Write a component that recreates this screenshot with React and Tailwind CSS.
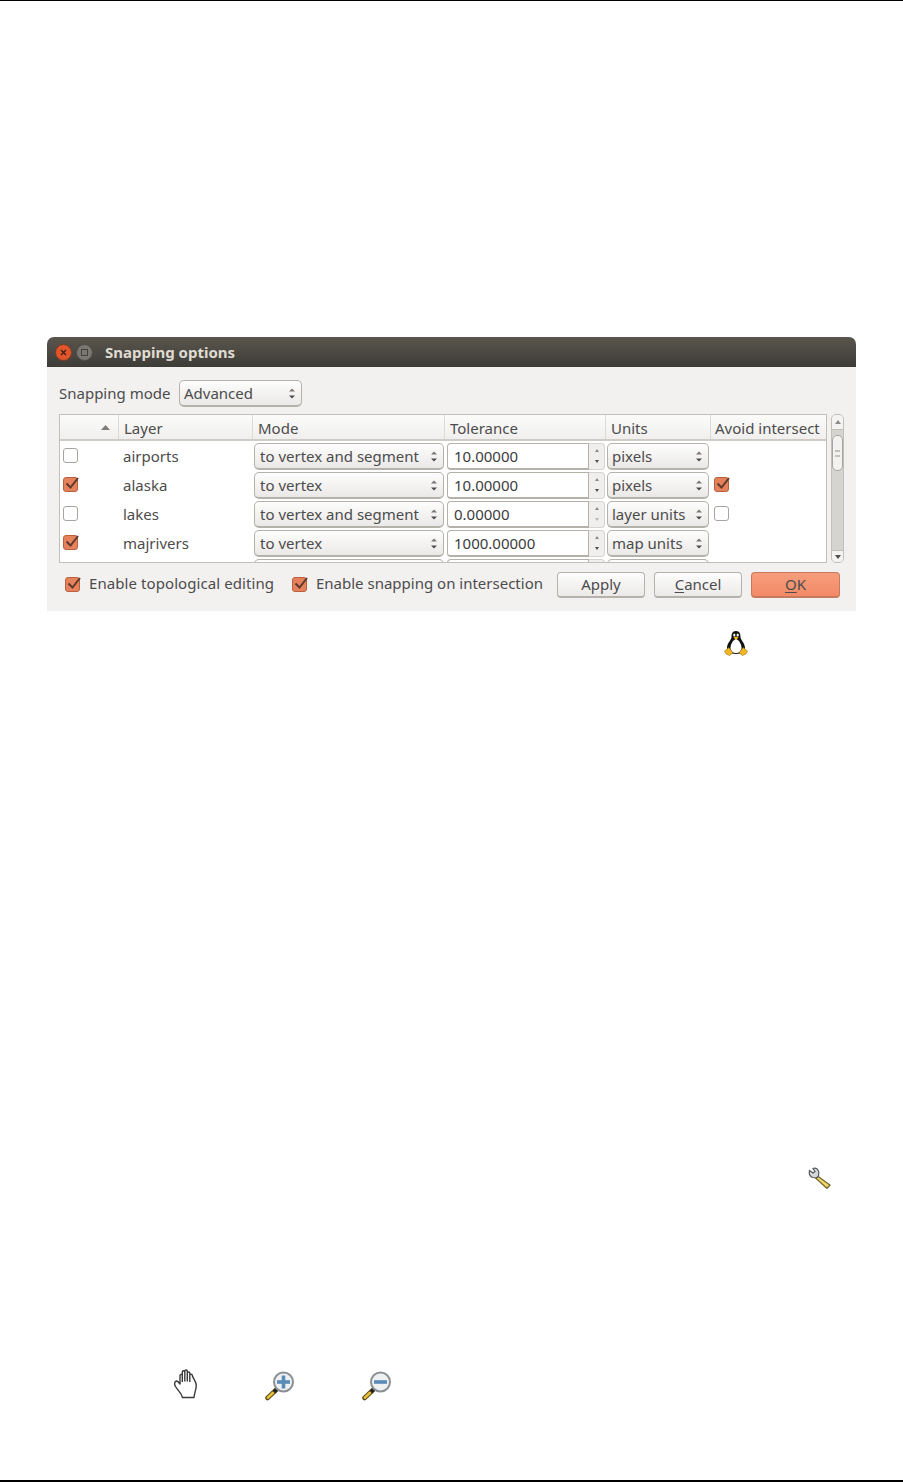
const font = { fontFamily: '"Noto Sans", sans-serif' };

const rows = [
  { name: "airports", on: false, mode: "to vertex and segment", tol: "10.00000", units: "pixels", avoid: null },
  { name: "alaska", on: true, mode: "to vertex", tol: "10.00000", units: "pixels", avoid: true },
  { name: "lakes", on: false, mode: "to vertex and segment", tol: "0.00000", units: "layer units", avoid: false, atMin: true },
  { name: "majrivers", on: true, mode: "to vertex", tol: "1000.00000", units: "map units", avoid: null },
  { name: "", on: false, mode: "", tol: "", units: "", avoid: null },
];

const gridCols = "grid grid-cols-[59px_134px_192px_161px_105px_115px]";

const UpDown = () => (
  <svg width="8" height="13" viewBox="0 0 8 13" className="shrink-0">
    <path d="M4 1.5 L7 4.5 H1 Z" fill="#7a7670" />
    <path d="M4 11.5 L7 8.5 H1 Z" fill="#4c4c4c" />
  </svg>
);

const Check = ({ on, className = "" }) => (
  <span
    className={`relative block w-[15px] h-[15px] rounded-[3px] border shrink-0 ${
      on ? "bg-[#e5825c] border-[#b9613f]" : "bg-white border-[#a8a5a0]"
    } ${className}`}
  >
    {on && (
      <svg width="17" height="15" viewBox="0 0 17 15" className="absolute left-[0px] top-[-2px]">
        <path d="M2.5 7.5 L6.5 11.5 L14 2" fill="none" stroke="#5e3a2c" strokeWidth="2" />
      </svg>
    )}
  </span>
);

const Combo = ({ text, className = "" }) => (
  <div
    className={`flex items-center justify-between rounded-[5px] border border-[#b5b2ac] border-b-2 bg-gradient-to-b from-[#fdfdfd] to-[#ebe9e7] pr-[5px] text-[#4c4c4c] overflow-hidden ${className}`}
  >
    <span className="whitespace-nowrap">{text}</span>
    <UpDown />
  </div>
);

const Spin = ({ text, atMin }) => (
  <div className="flex h-[27px] w-[158px] ml-[2px]">
    <div className="w-[142px] h-[27px] rounded-l-[4px] border border-[#b5b2ac] border-b-2 bg-white pl-[6px] leading-[25px] text-[#3c3c3c]">
      {text}
    </div>
    <div className="w-[16px] h-[27px] rounded-r-[4px] border border-l-0 border-[#d5d3cf] bg-[#f0efed] flex flex-col items-center justify-between py-[5px]">
      <svg width="6" height="4" viewBox="0 0 6 4"><path d="M3 0 L5 3 H1 Z" fill="#8a8a8a" /></svg>
      <svg width="6" height="4" viewBox="0 0 6 4"><path d="M3 3 L5 0 H1 Z" fill={atMin ? "#b5b5b5" : "#4c4c4c"} /></svg>
    </div>
  </div>
);

const Button = ({ children, primary, className = "" }) => (
  <div
    className={`h-[26px] rounded-[4px] border border-b-2 flex items-center justify-center text-[#4c4c4c] ${
      primary
        ? "border-[#c77a5c] bg-gradient-to-b from-[#f79d7c] to-[#f28a66]"
        : "border-[#b5b2ac] bg-gradient-to-b from-[#fdfdfd] to-[#eceae8]"
    } ${className}`}
  >
    {children}
  </div>
);

const Penguin = () => (
  <svg width="24" height="26" viewBox="0 0 24 26">
    <path d="M12 1 C8 1 7.5 4.5 7.5 7 C7.5 10 3 13 3 18 C3 21 6 24 12 24 C18 24 21 21 21 18 C21 13 16.5 10 16.5 7 C16.5 4.5 16 1 12 1 Z" fill="#111" />
    <path d="M12 9 C9 10 6.5 14 6.5 18 C6.5 21 9 23 12 23 C15 23 17.5 21 17.5 18 C17.5 14 15 10 12 9 Z" fill="#fff" />
    <ellipse cx="10.3" cy="5" rx="1.1" ry="1.5" fill="#fff" />
    <ellipse cx="13.7" cy="5" rx="1.1" ry="1.5" fill="#fff" />
    <path d="M9.5 7.5 L12 6.5 L14.5 7.5 L12 10 Z" fill="#f4b622" />
    <path d="M0.5 21 L5 17.5 L9 23 L5.5 25.5 L2 24 Z" fill="#f4b622" stroke="#8a6510" strokeWidth="0.5" />
    <path d="M23.5 21 L19 17.5 L15 23 L18.5 25.5 L22 24 Z" fill="#f4b622" stroke="#8a6510" strokeWidth="0.5" />
  </svg>
);

const Wrench = () => (
  <svg width="24" height="22" viewBox="0 0 24 22">
    <path d="M9.5 9 L22 18 L19 21.5 L8 11.5 Z" fill="#ecd46a" stroke="#6e6226" strokeWidth="1.2" />
    <path d="M1.5 3.5 L5 6 L7 4.5 L5 1.5 C8 0.5 11 2.5 10.8 6 L10.5 9 L8.5 11 L5 10.5 C2 10 0.5 7 1.5 3.5 Z" fill="#d5d7d8" stroke="#55595c" strokeWidth="1.2" />
  </svg>
);

const Hand = () => (
  <svg width="26" height="30" viewBox="0 0 26 30">
    <path
      d="M7 15 V6.5 C7 5 9.3 5 9.3 6.5 V3 C9.3 1.4 11.8 1.4 11.8 3 V2.2 C11.8 0.6 14.3 0.6 14.3 2.2 V4 C14.3 2.6 16.8 2.6 16.8 4 V6 C16.8 4.8 19.2 4.8 19.2 6.2 C20.5 11 24.5 13 23 19 C22.5 22 21.5 24 21 28.5 H9.5 C8.5 24 5.5 22.5 2.5 17.5 C1 15 1.5 12.2 3.5 12 C5 12 6 13.5 7 15 Z M9.3 6.5 V13 M11.8 3 V12.5 M14.3 4 V12.5 M16.8 6 V13"
      fill="#fff"
      stroke="#3a3a3a"
      strokeWidth="1.4"
      strokeLinejoin="round"
    />
  </svg>
);

const Magnifier = ({ plus }) => (
  <svg width="30" height="30" viewBox="0 0 30 30">
    <path d="M2.5 27 L11.5 18.5" stroke="#5b4a12" strokeWidth="4.5" strokeLinecap="round" />
    <path d="M2.8 26.7 L8 21.8" stroke="#e3c13c" strokeWidth="2.6" strokeLinecap="round" />
    <path d="M9 21 L12 18" stroke="#222" strokeWidth="3.5" />
    <circle cx="18.5" cy="11" r="9.5" fill="#eef0f1" stroke="#8b9094" strokeWidth="2" />
    <path d="M12 11 H25" stroke="#5b8bb8" strokeWidth="3.6" />
    {plus && <path d="M18.5 4.5 V17.5" stroke="#5b8bb8" strokeWidth="3.6" />}
  </svg>
);

const Dialog = () => (
  <div className="w-[809px] h-[274px] ml-[47px] flex flex-col rounded-t-[7px] overflow-hidden bg-[#f2f1f0] text-[15px] text-[#4c4c4c]">
    {/* Title bar */}
    <div className="h-[30px] shrink-0 flex items-center pl-[8px] bg-gradient-to-b from-[#5a564e] to-[#3e3c37]">
      <span className="w-[17px] h-[17px] rounded-full bg-[#e0562a] border border-[#7c3a22] flex items-center justify-center">
        <svg width="7" height="7" viewBox="0 0 7 7"><path d="M1 1 L6 6 M6 1 L1 6" stroke="#3a2018" strokeWidth="1.3" /></svg>
      </span>
      <span className="w-[17px] h-[17px] ml-[4px] rounded-full bg-[#7a7770] border border-[#4c4a45] flex items-center justify-center">
        <span className="w-[7px] h-[7px] border border-[#45433e]" />
      </span>
      <span className="ml-[12px] text-[15px] font-bold text-[#dfdbd2]">Snapping options</span>
    </div>

    {/* Mode selector */}
    <div className="flex items-center h-[27px] mt-[13px] ml-[12px] shrink-0">
      <span className="w-[120px]">Snapping mode</span>
      <Combo text="Advanced" className="w-[123px] h-[27px] pl-[4px]" />
    </div>

    {/* Layer table and scrollbar */}
    <div className="flex mt-[7px] ml-[12px] shrink-0">
      <div className="w-[768px] h-[149px] border border-[#c2bfba] bg-white overflow-hidden">
        <div className={`${gridCols} h-[26px] border-b-2 border-[#cfccc8] bg-gradient-to-b from-[#fbfbfa] to-[#f0efed]`}>
          <div className="flex items-center justify-end pr-[8px] border-r border-[#dcdad6]">
            <svg width="9" height="5" viewBox="0 0 9 5"><path d="M4.5 0 L9 5 H0 Z" fill="#7f7c77" /></svg>
          </div>
          {["Layer", "Mode", "Tolerance", "Units"].map((label) => (
            <div key={label} className="pl-[5px] leading-[27px] border-r border-[#dcdad6] whitespace-nowrap overflow-hidden">
              {label}
            </div>
          ))}
          <div className="pl-[4px] leading-[27px] whitespace-nowrap overflow-hidden">Avoid intersect</div>
        </div>
        <div className="flex flex-col gap-[2px] pt-[2px]">
          {rows.map((row, i) => (
            <div key={i} className={`${gridCols} h-[27px] items-center`}>
              <div className="pl-[3px] pb-[2px]"><Check on={row.on} /></div>
              <div className="pl-[4px]">{row.name}</div>
              <Combo text={row.mode} className="w-[190px] h-[27px] ml-[1px] pl-[5px]" />
              <Spin text={row.tol} atMin={row.atMin} />
              <Combo text={row.units} className="w-[102px] h-[27px] ml-[1px] pl-[4px]" />
              <div className="pl-[3px] pb-[2px]">{row.avoid !== null && <Check on={row.avoid} />}</div>
            </div>
          ))}
        </div>
      </div>
      <div className="w-[13px] h-[149px] ml-[4px] flex flex-col rounded-[5px] border border-[#c2bfba] bg-[#d6d4d0] overflow-hidden">
        <div className="h-[15px] bg-[#f4f3f2] border-b border-[#c2bfba] flex items-center justify-center shrink-0">
          <svg width="6" height="4" viewBox="0 0 6 4"><path d="M3 0 L6 4 H0 Z" fill="#8a8a8a" /></svg>
        </div>
        <div className="mt-[5px] h-[36px] rounded-[5px] border border-[#a8a5a0] bg-[#f3f2f1] flex items-center justify-center shrink-0">
          <span className="w-[5px] h-[7px] border-y-2 border-[#c4c2be]" />
        </div>
        <div className="flex-1" />
        <div className="h-[12px] bg-[#f4f3f2] border-t border-[#c2bfba] flex items-center justify-center shrink-0">
          <svg width="6" height="4" viewBox="0 0 6 4"><path d="M3 4 L6 0 H0 Z" fill="#4c4c4c" /></svg>
        </div>
      </div>
    </div>

    {/* Footer */}
    <div className="flex items-center h-[26px] mt-[9px] ml-[18px] shrink-0">
      <Check on className="mb-[2px]" />
      <span className="ml-[9px] w-[203px] mb-[3px] whitespace-nowrap tracking-[0.08px]">Enable topological editing</span>
      <Check on className="mb-[2px]" />
      <span className="ml-[9px] w-[241px] mb-[3px] whitespace-nowrap">Enable snapping on intersection</span>
      <Button className="w-[88px]">Apply</Button>
      <Button className="w-[88px] ml-[9px]"><span className="underline underline-offset-2">C</span>ancel</Button>
      <Button primary className="w-[89px] ml-[9px]"><span className="underline underline-offset-2">O</span>K</Button>
    </div>
  </div>
);

export default function App() {
  return (
    <div style={font} className="w-[903px] h-[1482px] bg-white border-t border-b-2 border-black flex flex-col overflow-hidden">
      <div className="h-[336px] shrink-0" />
      <Dialog />

      <div className="flex justify-end mt-[19px] pr-[155px] h-[26px] shrink-0"><Penguin /></div>

      <div className="flex justify-end mt-[511px] pr-[71px] h-[22px] shrink-0"><Wrench /></div>

      <div className="flex items-start mt-[180px] pl-[173px] shrink-0">
        <Hand />
        <div className="ml-[66px] mt-[2px]"><Magnifier plus /></div>
        <div className="ml-[67px] mt-[2px]"><Magnifier /></div>
      </div>
    </div>
  );
}
